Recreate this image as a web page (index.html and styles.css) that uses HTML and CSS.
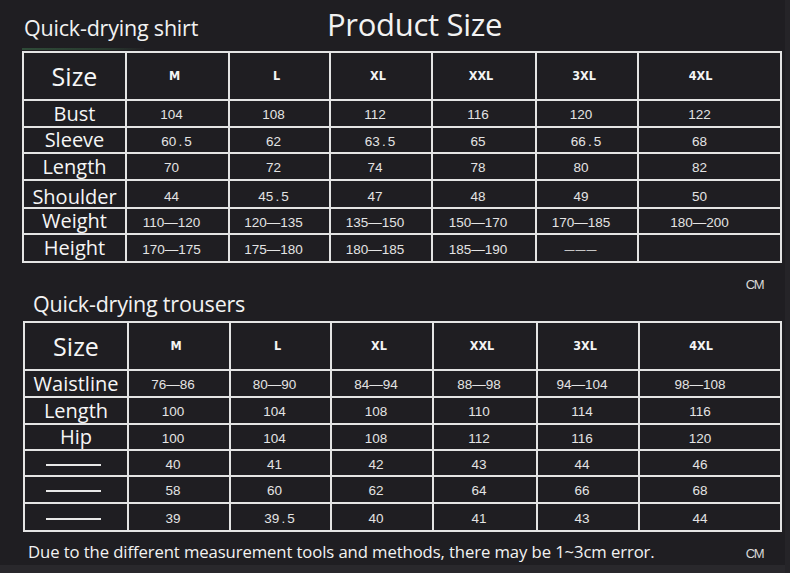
FILE: index.html
```html
<!DOCTYPE html>
<html>
<head>
<meta charset="utf-8">
<link rel="stylesheet" href="styles.css">
</head>
<body>
<div class="page">
  <div class="top">
    <div class="sub-title shirt">Quick-drying shirt</div>
    <div class="main-title">Product Size</div>
  </div>
  <div class="green-mark"></div>
  <table class="size-table t1">
    <colgroup>
      <col class="c0"><col class="c1"><col class="c2"><col class="c3"><col class="c4"><col class="c5"><col class="c6">
    </colgroup>
    <tr class="head"><td class="lbl big">Size</td><td class="sz">M</td><td class="sz">L</td><td class="sz">XL</td><td class="sz">XXL</td><td class="sz">3XL</td><td class="sz">4XL</td></tr>
    <tr class="r27"><td class="lbl">Bust</td><td>104</td><td>108</td><td>112</td><td>116</td><td>120</td><td>122</td></tr>
    <tr class="r26"><td class="lbl">Sleeve</td><td class="sh">60<span class="pt">.</span>5</td><td>62</td><td class="sh">63<span class="pt">.</span>5</td><td>65</td><td class="sh">66<span class="pt">.</span>5</td><td>68</td></tr>
    <tr class="r27"><td class="lbl">Length</td><td>70</td><td>72</td><td>74</td><td>78</td><td>80</td><td>82</td></tr>
    <tr class="r27 low"><td class="lbl">Shoulder</td><td>44</td><td>45<span class="pt">.</span>5</td><td>47</td><td>48</td><td>49</td><td>50</td></tr>
    <tr class="r26"><td class="lbl">Weight</td><td>110—120</td><td>120—135</td><td>135—150</td><td>150—170</td><td>170—185</td><td>180—200</td></tr>
    <tr class="r28"><td class="lbl">Height</td><td>170—175</td><td>175—180</td><td>180—185</td><td>185—190</td><td><span class="dash">———</span></td><td></td></tr>
  </table>
  <div class="unit u1">CM</div>
  <div class="sub-title trousers">Quick-drying trousers</div>
  <table class="size-table t2">
    <colgroup>
      <col class="d0"><col class="d1"><col class="d2"><col class="d3"><col class="d4"><col class="d5"><col class="d6">
    </colgroup>
    <tr class="head"><td class="lbl big">Size</td><td class="sz">M</td><td class="sz">L</td><td class="sz">XL</td><td class="sz">XXL</td><td class="sz">3XL</td><td class="sz">4XL</td></tr>
    <tr class="r27"><td class="lbl">Waistline</td><td>76—86</td><td>80—90</td><td>84—94</td><td>88—98</td><td>94—104</td><td>98—108</td></tr>
    <tr class="r27"><td class="lbl">Length</td><td>100</td><td>104</td><td>108</td><td>110</td><td>114</td><td>116</td></tr>
    <tr class="r26"><td class="lbl">Hip</td><td>100</td><td>104</td><td>108</td><td>112</td><td>116</td><td>120</td></tr>
    <tr class="r26"><td class="lbl"><span class="rule"></span></td><td>40</td><td>41</td><td>42</td><td>43</td><td>44</td><td>46</td></tr>
    <tr class="r27"><td class="lbl"><span class="rule"></span></td><td>58</td><td>60</td><td>62</td><td>64</td><td>66</td><td>68</td></tr>
    <tr class="r28"><td class="lbl"><span class="rule"></span></td><td>39</td><td class="sh">39<span class="pt">.</span>5</td><td>40</td><td>41</td><td>43</td><td>44</td></tr>
  </table>
  <div class="foot">
    <div class="note">Due to the different measurement tools and methods, there may be 1~3cm error.</div>
    <div class="unit">CM</div>
  </div>
</div>
</body>
</html>
```

FILE: styles.css
```css
html, body {
  margin: 0;
  padding: 0;
  background: #1f1e22;
}
.page {
  width: 790px;
  height: 573px;
  overflow: hidden;
  color: #f2f2f2;
  font-family: "Open Sans", "Noto Sans", sans-serif;
  background:
    linear-gradient(90deg, transparent 785px, #252428 785px),
    linear-gradient(180deg, #1f1e22 565px, #29282c 565px);
}
.top {
  display: flex;
  align-items: baseline;
  height: 39px;
  padding-top: 3px;
  padding-left: 24px;
}
.sub-title {
  font-size: 21.5px;
  letter-spacing: -0.2px;
}
.shirt {
  width: 303px;
}
.main-title {
  font-size: 31px;
  letter-spacing: -0.3px;
}
.green-mark {
  margin-left: 22px;
  width: 122px;
  height: 2px;
  margin-top: 6px;
  background: linear-gradient(90deg, #3a6a48, #2e4a36 70%, rgba(60,60,60,0.2));
  opacity: 0.6;
}
.size-table {
  border-collapse: collapse;
  table-layout: fixed;
  border: 2px solid #e8e8e8;
}
.size-table td {
  border: 2px solid #e4e4e4;
  padding: 3px 12px 0 0;
  text-align: center;
  font-family: "Liberation Sans", Arial, sans-serif;
  font-size: 13.5px;
  line-height: 16px;
  color: #e4e4e4;
  vertical-align: middle;
  white-space: nowrap;
}
.size-table td:last-child {
  padding-right: 20px;
}
.size-table tr.low td {
  padding-top: 6px;
}
.size-table td.lbl {
  font-family: "Open Sans", "Noto Sans", sans-serif;
  font-size: 20px;
  color: #f6f6f6;
  padding: 0;
  line-height: 20px;
}
.size-table td.big {
  font-size: 25px;
  line-height: 28px;
}
.size-table td.sz {
  font-family: "DejaVu Sans Condensed", "DejaVu Sans", sans-serif;
  font-weight: bold;
  font-size: 12.5px;
  color: #f4f4f4;
  padding: 0 6px 0 0;
}
.size-table td.sz:last-child {
  padding-right: 18px;
}
.size-table td.sh {
  padding-left: 10px;
}
.pt {
  margin: 0 2px;
}
.dash {
  font-size: 10px;
  letter-spacing: 1px;
}
.t1 {
  margin-left: 22px;
  margin-top: 1px;
  width: 758px;
}
.c0 { width: 103px; }
.c1 { width: 103px; }
.c2 { width: 101px; }
.c3 { width: 102px; }
.c4 { width: 104px; }
.c5 { width: 102px; }
.c6 { width: 143px; }
.t2 {
  margin-left: 23px;
  width: 757px;
}
.d0 { width: 104px; }
.d1 { width: 102px; }
.d2 { width: 101px; }
.d3 { width: 102px; }
.d4 { width: 104px; }
.d5 { width: 102px; }
.d6 { width: 142px; }
tr.head { height: 48px; }
tr.r26 { height: 26px; }
tr.r27 { height: 27px; }
tr.r28 { height: 28px; }
.unit {
  font-family: "Liberation Sans", Arial, sans-serif;
  font-size: 13px;
  color: #d8d8d8;
  letter-spacing: -1.5px;
}
.u1 {
  text-align: right;
  padding-right: 27px;
  margin-top: 14px;
  height: 14px;
}
.trousers {
  padding-left: 33px;
  font-size: 21.5px;
  height: 28px;
  margin-top: -1px;
  margin-bottom: 3px;
  line-height: 28px;
}
.rule {
  display: inline-block;
  width: 55px;
  height: 2px;
  background: #e8e8e8;
  vertical-align: middle;
  margin-right: 6px;
}
.foot {
  display: flex;
  align-items: baseline;
  justify-content: space-between;
  padding: 8px 27px 0 28px;
}
.note {
  font-size: 16.7px;
  letter-spacing: -0.1px;
}
```
